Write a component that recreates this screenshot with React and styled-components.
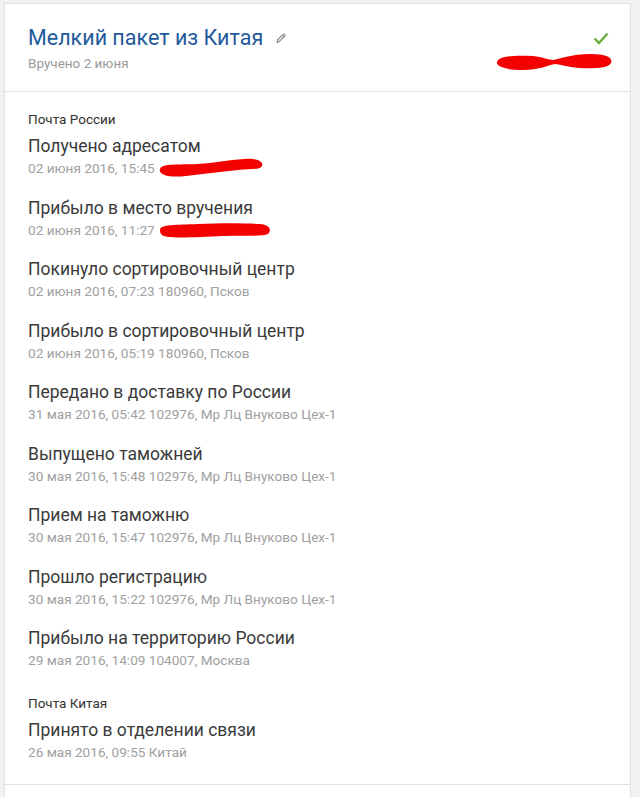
import styled, { createGlobalStyle } from "styled-components";

const GlobalStyle = createGlobalStyle`
  html, body {
    margin: 0;
    padding: 0;
    background: #f1f1f1;
    font-family: Roboto, "Liberation Sans", Arial, sans-serif;
  }
`;

const Page = styled.div`
  padding: 3px 9px 0 4px;
  min-height: 797px;
  box-sizing: border-box;
`;

const Card = styled.div`
  background: #fff;
  border: 1px solid #e2e2e2;
  border-bottom: none;
`;

const Header = styled.div`
  display: flex;
  justify-content: space-between;
  align-items: flex-start;
  padding: 20px 17px 19px 23px;
  border-bottom: 1px solid #e0e0e0;
`;

const TitleRow = styled.div`
  display: flex;
  align-items: center;
  gap: 12px;
`;

const Title = styled.h1`
  margin: 0;
  font-size: 21.5px;
  line-height: 28px;
  font-weight: 400;
  color: #1f5a9c;
`;

const Subtitle = styled.div`
  margin-top: 2px;
  font-size: 13.5px;
  line-height: 18px;
  color: #9a9a9a;
`;

const Status = styled.div`
  display: flex;
  flex-direction: column;
  align-items: flex-end;
  padding-top: 8px;
  gap: 7px;

  & > svg:first-child {
    margin-right: 4px;
  }
`;

const Body = styled.div`
  padding: 19px 24px 4px 23px;
  border-bottom: 1px solid #e0e0e0;
`;

const Section = styled.section`
  & + & {
    margin-top: 6px;
  }
`;

const Carrier = styled.div`
  font-size: 13.5px;
  line-height: 16px;
  color: #333;
  margin-bottom: 8px;
`;

const Event = styled.div`
  padding-bottom: 19.5px;
`;

const EventTitle = styled.div`
  font-size: 17.5px;
  line-height: 22px;
  color: #3a3a3a;
`;

const EventMeta = styled.div`
  margin-top: 2px;
  height: 18px;
  font-size: 13.6px;
  line-height: 18px;
  color: #a0a0a0;
  display: flex;
  align-items: center;
`;

const Scribble = styled.svg`
  margin: -2px 0 -2px 3px;
  flex: none;
`;

const Rest = styled.div`
  background: #fff;
  height: 20px;
`;

const Pencil = () => (
  <svg width="11" height="12" viewBox="0 0 11 12">
    <path
      d="M2 10.5 L2.6 8 L8.2 2.4 a1 1 0 0 1 1.4 0 l0.2 0.2 a1 1 0 0 1 0 1.4 L4.2 9.6 Z M7.4 3.2 l1.6 1.6"
      fill="none"
      stroke="#8a8a8a"
      strokeWidth="1.1"
      strokeLinejoin="round"
    />
  </svg>
);

const Check = () => (
  <svg width="16" height="13" viewBox="0 0 16 13">
    <path d="M1.5 6.5 L6 11 L14.5 1.5" fill="none" stroke="#6aab3c" strokeWidth="2.4" />
  </svg>
);

const RedMark = ({ width, height, d }) => (
  <Scribble width={width} height={height} viewBox={`0 0 ${width} ${height}`}>
    <path d={d} fill="#f40000" />
  </Scribble>
);

const russia = [
  ["Получено адресатом", "02 июня 2016, 15:45", "a"],
  ["Прибыло в место вручения", "02 июня 2016, 11:27", "b"],
  ["Покинуло сортировочный центр", "02 июня 2016, 07:23 180960, Псков"],
  ["Прибыло в сортировочный центр", "02 июня 2016, 05:19 180960, Псков"],
  ["Передано в доставку по России", "31 мая 2016, 05:42 102976, Мр Лц Внуково Цех-1"],
  ["Выпущено таможней", "30 мая 2016, 15:48 102976, Мр Лц Внуково Цех-1"],
  ["Прием на таможню", "30 мая 2016, 15:47 102976, Мр Лц Внуково Цех-1"],
  ["Прошло регистрацию", "30 мая 2016, 15:22 102976, Мр Лц Внуково Цех-1"],
  ["Прибыло на территорию России", "29 мая 2016, 14:09 104007, Москва"],
];

const china = [["Принято в отделении связи", "26 мая 2016, 09:55 Китай"]];

const marks = {
  a: {
    width: 106,
    height: 20,
    d: "M2 11 C4 5 20 7 40 6 C56 5 70 2 86 1 C98 0 106 3 104 8 C102 12 92 11 80 12 C62 14 44 16 28 18 C12 20 0 17 2 11 Z",
  },
  b: {
    width: 114,
    height: 20,
    d: "M2 10 C2 4 18 5 40 4 C62 3 84 3 102 4 C112 5 114 10 110 14 C104 17 86 15 66 16 C44 17 22 18 10 17 C4 16 2 14 2 10 Z",
  },
};

function EventRow({ title, meta, mark }) {
  return (
    <Event>
      <EventTitle>{title}</EventTitle>
      <EventMeta>
        {meta}
        {mark && <RedMark {...marks[mark]} />}
      </EventMeta>
    </Event>
  );
}

export default function App() {
  return (
    <>
      <GlobalStyle />
      <Page>
        <Card>
          <Header>
            <div>
              <TitleRow>
                <Title>Мелкий пакет из Китая</Title>
                <Pencil />
              </TitleRow>
              <Subtitle>Вручено 2 июня</Subtitle>
            </div>
            <Status>
              <Check />
              <svg width="118" height="20" viewBox="0 0 118 20">
                <path
                  d="M2 10 C3 4 20 3 38 4 C48 5 54 8 58 8 C64 7 76 2 96 2 C112 2 118 6 116 11 C114 16 98 17 84 16 C72 15 64 12 60 12 C54 13 44 18 28 18 C12 18 1 15 2 10 Z"
                  fill="#f40000"
                />
              </svg>
            </Status>
          </Header>
          <Body>
            <Section>
              <Carrier>Почта России</Carrier>
              {russia.map(([t, m, k]) => (
                <EventRow key={t} title={t} meta={m} mark={k} />
              ))}
            </Section>
            <Section>
              <Carrier>Почта Китая</Carrier>
              {china.map(([t, m]) => (
                <EventRow key={t} title={t} meta={m} />
              ))}
            </Section>
          </Body>
          <Rest />
        </Card>
      </Page>
    </>
  );
}
